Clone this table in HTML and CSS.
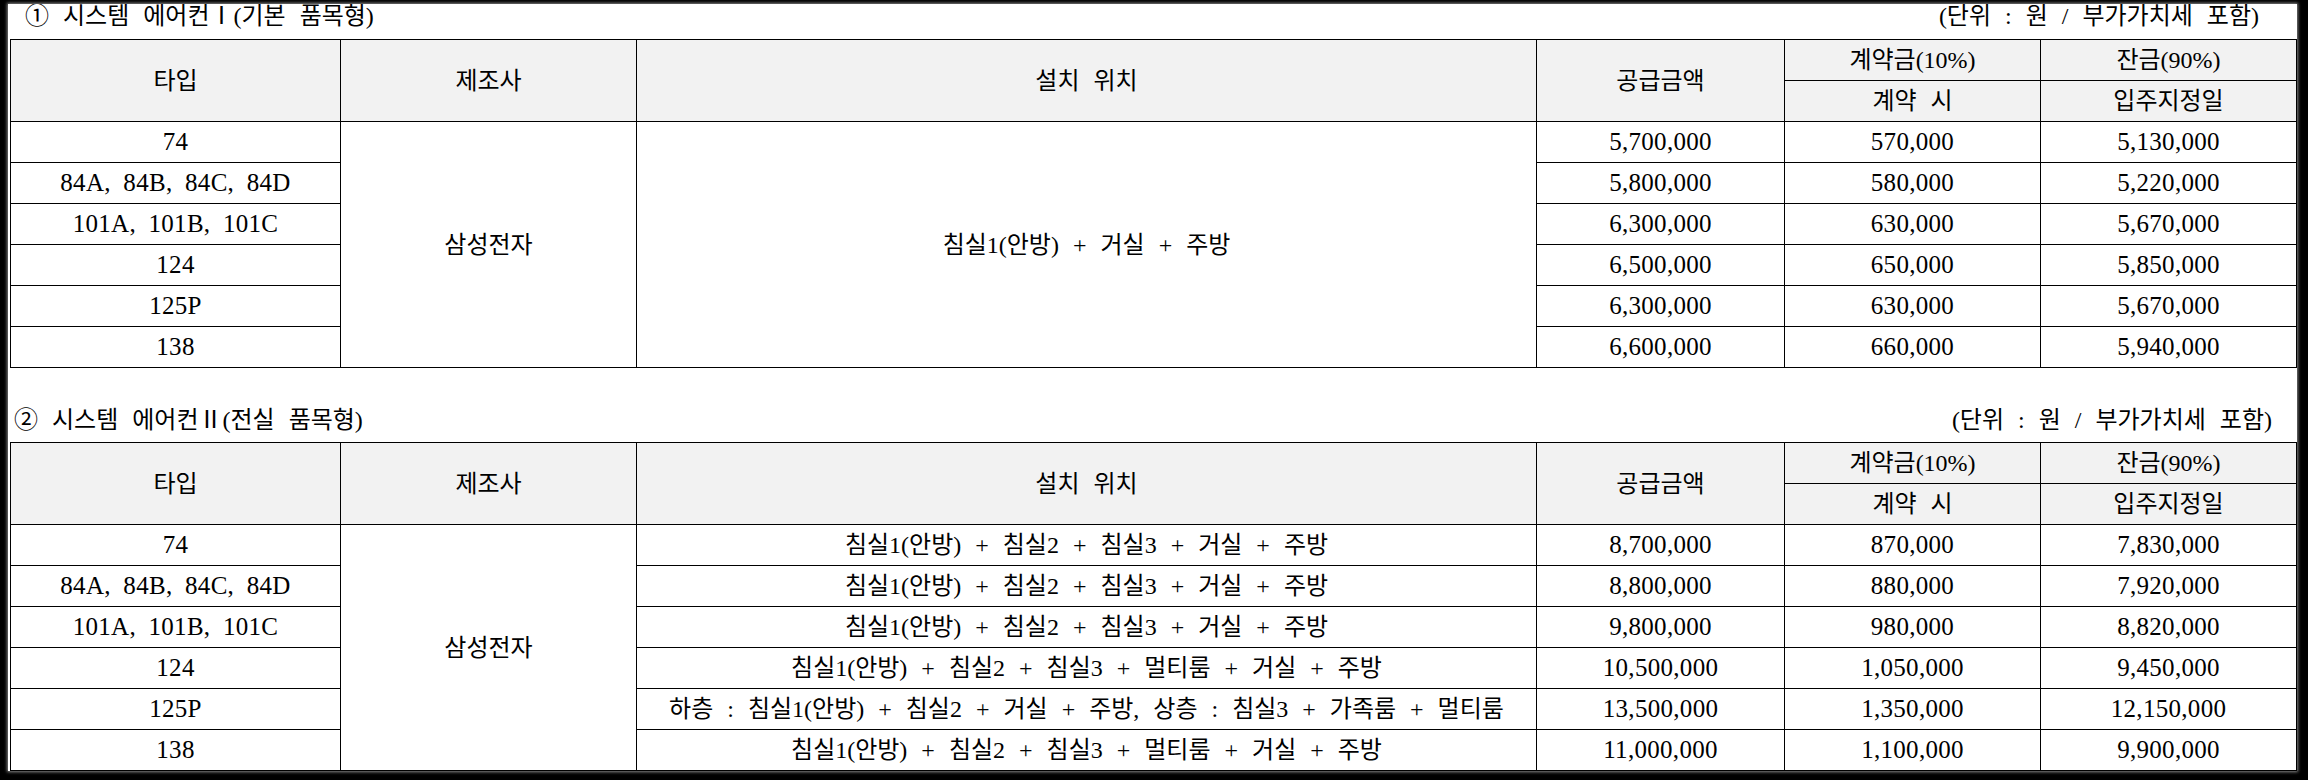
FILE: index.html
```html
<!DOCTYPE html>
<html lang="ko">
<head>
<meta charset="utf-8">
<title>시스템 에어컨</title>
<link rel="stylesheet" href="styles.css">
</head>
<body>
<div class="sheet">
  <div class="caption caption-first">
    <span class="title">① 시스템 에어컨Ⅰ(기본 품목형)</span>
    <span class="note">(단위 : 원 / 부가가치세 포함)</span>
  </div>
  <div class="grid">
    <div class="c h r2">타입</div>
    <div class="c h r2">제조사</div>
    <div class="c h r2">설치 위치</div>
    <div class="c h r2">공급금액</div>
    <div class="c h">계약금(10%)</div>
    <div class="c h">잔금(90%)</div>
    <div class="c h">계약 시</div>
    <div class="c h">입주지정일</div>

    <div class="c num">74</div>
    <div class="c r6">삼성전자</div>
    <div class="c r6">침실1(안방) + 거실 + 주방</div>
    <div class="c num">5,700,000</div>
    <div class="c num">570,000</div>
    <div class="c num">5,130,000</div>

    <div class="c num">84A, 84B, 84C, 84D</div>
    <div class="c num">5,800,000</div>
    <div class="c num">580,000</div>
    <div class="c num">5,220,000</div>

    <div class="c num">101A, 101B, 101C</div>
    <div class="c num">6,300,000</div>
    <div class="c num">630,000</div>
    <div class="c num">5,670,000</div>

    <div class="c num">124</div>
    <div class="c num">6,500,000</div>
    <div class="c num">650,000</div>
    <div class="c num">5,850,000</div>

    <div class="c num">125P</div>
    <div class="c num">6,300,000</div>
    <div class="c num">630,000</div>
    <div class="c num">5,670,000</div>

    <div class="c num">138</div>
    <div class="c num">6,600,000</div>
    <div class="c num">660,000</div>
    <div class="c num">5,940,000</div>
  </div>

  <div class="caption caption-second">
    <span class="title">② 시스템 에어컨Ⅱ(전실 품목형)</span>
    <span class="note">(단위 : 원 / 부가가치세 포함)</span>
  </div>
  <div class="grid">
    <div class="c h r2">타입</div>
    <div class="c h r2">제조사</div>
    <div class="c h r2">설치 위치</div>
    <div class="c h r2">공급금액</div>
    <div class="c h">계약금(10%)</div>
    <div class="c h">잔금(90%)</div>
    <div class="c h">계약 시</div>
    <div class="c h">입주지정일</div>

    <div class="c num">74</div>
    <div class="c r6">삼성전자</div>
    <div class="c">침실1(안방) + 침실2 + 침실3 + 거실 + 주방</div>
    <div class="c num">8,700,000</div>
    <div class="c num">870,000</div>
    <div class="c num">7,830,000</div>

    <div class="c num">84A, 84B, 84C, 84D</div>
    <div class="c">침실1(안방) + 침실2 + 침실3 + 거실 + 주방</div>
    <div class="c num">8,800,000</div>
    <div class="c num">880,000</div>
    <div class="c num">7,920,000</div>

    <div class="c num">101A, 101B, 101C</div>
    <div class="c">침실1(안방) + 침실2 + 침실3 + 거실 + 주방</div>
    <div class="c num">9,800,000</div>
    <div class="c num">980,000</div>
    <div class="c num">8,820,000</div>

    <div class="c num">124</div>
    <div class="c">침실1(안방) + 침실2 + 침실3 + 멀티룸 + 거실 + 주방</div>
    <div class="c num">10,500,000</div>
    <div class="c num">1,050,000</div>
    <div class="c num">9,450,000</div>

    <div class="c num">125P</div>
    <div class="c">하층 : 침실1(안방) + 침실2 + 거실 + 주방, 상층 : 침실3 + 가족룸 + 멀티룸</div>
    <div class="c num">13,500,000</div>
    <div class="c num">1,350,000</div>
    <div class="c num">12,150,000</div>

    <div class="c num">138</div>
    <div class="c">침실1(안방) + 침실2 + 침실3 + 멀티룸 + 거실 + 주방</div>
    <div class="c num">11,000,000</div>
    <div class="c num">1,100,000</div>
    <div class="c num">9,900,000</div>
  </div>
</div>
</body>
</html>
```

FILE: styles.css
```css
html, body {
  margin: 0;
  padding: 0;
}

body {
  width: 2308px;
  height: 780px;
  overflow: hidden;
  background: #000;
  font-family: "Liberation Serif", "Noto Sans CJK KR", serif;
  font-size: 24px;
  line-height: 24px;
  word-spacing: 8px;
  color: #000;
}

.sheet {
  margin: 4px 0 0 8px;
  width: 2289px;
  height: 767px;
  background: #fff;
  overflow: hidden;
  box-shadow: 0 0 3px 1px #8a8a8a;
}

.caption {
  display: flex;
  justify-content: space-between;
  align-items: flex-end;
  height: 24px;
  margin-bottom: 11px;
  white-space: nowrap;
}

.caption-first {
  margin-top: 0;
  margin-bottom: 11px;
  padding: 0 38px 0 17px;
}

.caption-second {
  margin-top: 40px;
  margin-bottom: 10px;
  padding: 0 25px 0 6px;
}

.grid {
  display: grid;
  grid-template-columns: 329px 295px 899px 247px 255px 255px;
  grid-auto-rows: 40px;
  gap: 1px;
  justify-content: start;
  margin-left: 2px;
  width: 2285px;
  background: #000;
  border: 1px solid #000;
}

.c {
  display: flex;
  align-items: center;
  justify-content: center;
  background: #fff;
  white-space: nowrap;
}

.h {
  background: #f2f2f2;
}

.r2 {
  grid-row: span 2;
}

.r6 {
  grid-row: span 6;
}

.num {
  font-size: 25px;
  letter-spacing: 0.3px;
  word-spacing: 6px;
}
```
